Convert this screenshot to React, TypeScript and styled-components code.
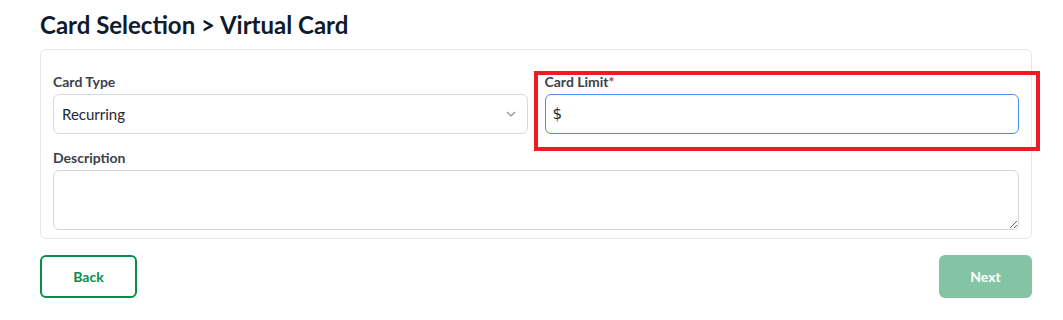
import React from "react";
import styled, { createGlobalStyle } from "styled-components";

const GlobalStyle = createGlobalStyle`
  html, body { margin: 0; padding: 0; background: #ffffff; }
  body { font-family: "Lato", "Open Sans", sans-serif; }
  * { box-sizing: border-box; }
`;

const Page = styled.div`
  width: 1063px;
  padding: 11px 31px 0 40px;
`;

const Title = styled.h1`
  margin: 0 0 11px;
  font-size: 24px;
  line-height: 27px;
  font-weight: 700;
  color: #0f1b2d;
`;

const Card = styled.div`
  border: 1px solid #e2e6ee;
  border-radius: 6px;
  padding: 22px 12px 8px 12px;
  display: grid;
  grid-template-columns: 1fr 1fr;
  column-gap: 17px;
  row-gap: 14px;
`;

const Field = styled.div<{ $full?: boolean }>`
  position: relative;
  display: flex;
  flex-direction: column;
  gap: 2px;
  grid-column: ${(p) => (p.$full ? "1 / -1" : "auto")};
`;

const Label = styled.label`
  font-size: 14px;
  line-height: 20px;
  font-weight: 700;
  color: #3b414c;
`;

const Required = styled.span`
  color: #e02424;
`;

const SelectBox = styled.div`
  height: 40px;
  border: 1px solid #d6d9e0;
  border-radius: 6px;
  display: flex;
  align-items: center;
  justify-content: space-between;
  padding: 0 11px 0 8px;
  font-size: 15px;
  color: #1e2633;
`;

const InputBox = styled.div`
  height: 40px;
  border: 1px solid #4b8df2;
  border-radius: 6px;
  display: flex;
  align-items: center;
  padding: 0 7px;
  font-size: 15px;
  color: #1e2633;
  font-family: "DejaVu Sans", sans-serif;
`;

const TextArea = styled.textarea`
  height: 60px;
  border: 1px solid #d2d5dd;
  border-radius: 6px;
  resize: vertical;
  font-family: inherit;
  font-size: 15px;
  outline: none;
  display: block;
  width: 100%;
`;

const Highlight = styled.div`
  position: absolute;
  left: -11px;
  top: -1px;
  width: 506px;
  height: 80px;
  border: 4px solid #ed1c24;
  pointer-events: none;
`;

const Actions = styled.div`
  display: flex;
  justify-content: space-between;
  margin-top: 16px;
`;

const Button = styled.button<{ $variant: "outline" | "solid" }>`
  height: 43px;
  width: ${(p) => (p.$variant === "outline" ? "97px" : "93px")};
  border-radius: 6px;
  font-family: inherit;
  font-size: 14px;
  font-weight: 700;
  cursor: pointer;
  border: ${(p) => (p.$variant === "outline" ? "2px solid #0b8c4c" : "none")};
  background: ${(p) => (p.$variant === "outline" ? "#ffffff" : "#82c4a3")};
  color: ${(p) => (p.$variant === "outline" ? "#0b8c4c" : "#ffffff")};
`;

const Chevron = () => (
  <svg width="10" height="6" viewBox="0 0 10 6" fill="none">
    <path d="M1 1l4 4 4-4" stroke="#8a8f99" strokeWidth="1.2" />
  </svg>
);

export default function App() {
  return (
    <>
      <GlobalStyle />
      <Page>
        <Title>Card Selection &gt; Virtual Card</Title>
        <Card>
          <Field>
            <Label>Card Type</Label>
            <SelectBox>
              <span>Recurring</span>
              <Chevron />
            </SelectBox>
          </Field>
          <Field>
            <Label>
              Card Limit<Required>*</Required>
            </Label>
            <InputBox>$</InputBox>
            <Highlight />
          </Field>
          <Field $full>
            <Label>Description</Label>
            <TextArea />
          </Field>
        </Card>
        <Actions>
          <Button $variant="outline">Back</Button>
          <Button $variant="solid">Next</Button>
        </Actions>
      </Page>
    </>
  );
}
